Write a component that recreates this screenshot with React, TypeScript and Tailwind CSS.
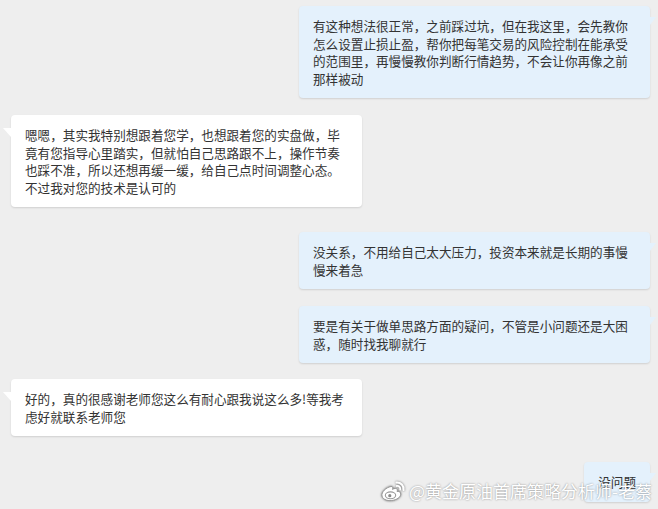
type Side = "left" | "right";

interface BubbleProps {
  side: Side;
  className?: string;
  children: React.ReactNode;
}

const Bubble = ({ side, className, children }: BubbleProps) => {
  const isRight = side === "right";
  return (
    <div
      className={
        (isRight
          ? "self-end mr-[8px] bg-[#e4f1fc] "
          : "self-start ml-[11px] bg-white ") +
        "relative rounded-[4px] px-[14px] py-[11px] text-[12.6px] leading-[17.5px] text-[#333333] shadow-[0_1px_2px_rgba(0,0,0,0.13)] " +
        (className ?? "")
      }
    >
      {/* tail */}
      {isRight ? (
        <span className="absolute top-[11px] right-[-6px] w-0 h-0 border-t-[8px] border-t-[#e4f1fc] border-r-[6px] border-r-transparent" />
      ) : (
        <span className="absolute top-[13px] left-[-8px] w-0 h-0 border-t-[9px] border-t-white border-l-[8px] border-l-transparent" />
      )}
      {children}
    </div>
  );
};

const WeiboLogo = () => (
  <svg
    width="26"
    height="22"
    viewBox="0 0 26 22"
    className="[filter:drop-shadow(0_0_1px_rgba(0,0,0,0.55))]"
  >
    <path
      d="M11 6.5C6 7.5 1.2 12 2 16c0.8 4 7 5.4 11.5 4.2C18.5 19 21.5 16 20.5 13c-0.6-1.8-2.2-1.8-3.4-1.4 0.6-1.8 0.1-3.2-1.8-3.2-1 0-2 0.5-2.8 1 0.6-1.6 0.3-3.3-1.5-2.9z"
      fill="white"
      stroke="#9a9a9a"
      strokeWidth="1"
    />
    <ellipse cx="10.5" cy="15.3" rx="5.2" ry="3.4" fill="none" stroke="#9a9a9a" strokeWidth="1.1" />
    <circle cx="9.8" cy="15.7" r="1.6" fill="#8a8a8a" />
    <path d="M16.5 2.5a6.5 6.5 0 0 1 7 7.5" fill="none" stroke="white" strokeWidth="2" strokeLinecap="round" />
    <path d="M16.8 6a3 3 0 0 1 3.4 3.6" fill="none" stroke="white" strokeWidth="1.8" strokeLinecap="round" />
  </svg>
);

export default function App() {
  return (
    <div className="relative h-[509px] w-full overflow-hidden bg-[#eeeeee] font-['Noto_Sans_CJK_SC','Liberation_Sans',sans-serif]">
      <div className="flex flex-col pt-[6px]">
        <Bubble side="right" className="w-[351px]">
          有这种想法很正常，之前踩过坑，但在我这里，会先教你怎么设置止损止盈，帮你把每笔交易的风险控制在能承受的范围里，再慢慢教你判断行情趋势，不会让你再像之前那样被动
        </Bubble>
        <Bubble side="left" className="w-[351px] mt-[17px]">
          嗯嗯，其实我特别想跟着您学，也想跟着您的实盘做，毕竟有您指导心里踏实，但就怕自己思路跟不上，操作节奏也踩不准，所以还想再缓一缓，给自己点时间调整心态。
          <br />
          不过我对您的技术是认可的
        </Bubble>
        <Bubble side="right" className="w-[351px] mt-[25px]">
          没关系，不用给自己太大压力，投资本来就是长期的事慢慢来着急
        </Bubble>
        <Bubble side="right" className="w-[351px] mt-[17px]">
          要是有关于做单思路方面的疑问，不管是小问题还是大困惑，随时找我聊就行
        </Bubble>
        <Bubble side="left" className="w-[351px] mt-[16px]">
          好的，真的很感谢老师您这么有耐心跟我说这么多!等我考虑好就联系老师您
        </Bubble>
        <Bubble side="right" className="mt-[26px]">
          没问题
        </Bubble>
      </div>

      {/* watermark */}
      <div className="absolute left-[380px] top-[480px] flex items-center gap-[3px] text-white text-[17px] leading-[22px] [text-shadow:0_0_2px_rgba(0,0,0,0.45)]">
        <WeiboLogo />
        <span>@黄金原油首席策略分析师-老蔡</span>
      </div>
    </div>
  );
}
